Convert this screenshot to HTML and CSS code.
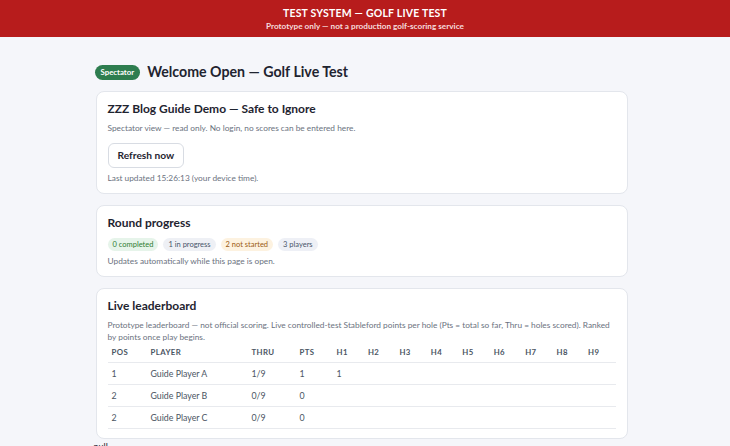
FILE: index.html
```html
<!DOCTYPE html>
<html lang="en">
<head>
    <meta charset="UTF-8">
    <meta name="viewport" content="width=device-width, initial-scale=1.0">
    <title>Welcome Open — Golf Live Test</title>
    <link rel="stylesheet" href="styles.css">
</head>
<body>
    <div class="test-banner">
        <div class="test-banner-title">TEST SYSTEM — GOLF LIVE TEST</div>
        <div class="test-banner-sub">Prototype only — not a production golf-scoring service</div>
    </div>

    <div class="container">
        <div class="page-head">
            <span class="role-badge">Spectator</span>
            <h1>Welcome Open — Golf Live Test</h1>
        </div>

        <div class="card">
            <h2>ZZZ Blog Guide Demo — Safe to Ignore</h2>
            <p class="muted">Spectator view — read only. No login, no scores can be entered here.</p>
            <button class="btn">Refresh now</button>
            <p class="muted">Last updated 15:26:13 (your device time).</p>
        </div>

        <div class="card">
            <h2>Round progress</h2>
            <div class="pills">
                <span class="pill pill-done">0 completed</span>
                <span class="pill pill-live">1 in progress</span>
                <span class="pill pill-wait">2 not started</span>
                <span class="pill pill-count">3 players</span>
            </div>
            <p class="muted">Updates automatically while this page is open.</p>
        </div>

        <div class="card">
            <h2>Live leaderboard</h2>
            <p class="muted">Prototype leaderboard — not official scoring. Live controlled-test Stableford points per hole (Pts = total so far, Thru = holes scored). Ranked by points once play begins.</p>
            <table class="board">
                <thead>
                    <tr>
                        <th class="c-pos">POS</th>
                        <th class="c-player">PLAYER</th>
                        <th class="c-thru">THRU</th>
                        <th class="c-pts">PTS</th>
                        <th>H1</th><th>H2</th><th>H3</th><th>H4</th><th>H5</th>
                        <th>H6</th><th>H7</th><th>H8</th><th>H9</th>
                    </tr>
                </thead>
                <tbody>
                    <tr>
                        <td>1</td><td>Guide Player A</td><td>1/9</td><td>1</td>
                        <td>1</td><td></td><td></td><td></td><td></td><td></td><td></td><td></td><td></td>
                    </tr>
                    <tr>
                        <td>2</td><td>Guide Player B</td><td>0/9</td><td>0</td>
                        <td></td><td></td><td></td><td></td><td></td><td></td><td></td><td></td><td></td>
                    </tr>
                    <tr>
                        <td>2</td><td>Guide Player C</td><td>0/9</td><td>0</td>
                        <td></td><td></td><td></td><td></td><td></td><td></td><td></td><td></td><td></td>
                    </tr>
                </tbody>
            </table>
        </div>
        <div class="stray">null</div>
    </div>
</body>
</html>
```

FILE: styles.css
```css
body {
    font-family: Lato, 'Open Sans', sans-serif;
    margin: 0;
    background-color: #f5f6fa;
    color: #1f2430;
}

.test-banner {
    background-color: #b71c1c;
    color: white;
    text-align: center;
    height: 37px;
    box-sizing: border-box;
    padding-top: 6px;
}

.test-banner-title {
    font-weight: 700;
    font-size: 10.5px;
    line-height: 14px;
    letter-spacing: 0.2px;
}

.test-banner-sub {
    font-size: 8.2px;
    font-weight: 700;
    line-height: 12px;
    color: #f6dcdc;
}

.container {
    max-width: 539px;
    box-sizing: border-box;
    padding-right: 7px;
    margin: 0 auto;
}

.page-head {
    display: flex;
    align-items: center;
    gap: 7px;
    margin: 25px 0 9px;
}

.page-head h1 {
    margin: 0;
    font-size: 14.2px;
    font-weight: 700;
    line-height: 20px;
}

.role-badge {
    background: #2e7d4f;
    color: white;
    font-size: 7.8px;
    font-weight: 700;
    padding: 2px 6px;
    border-radius: 10px;
    line-height: 11px;
    margin-left: -1px;
}

.card {
    background: white;
    border: 1px solid #e3e6ec;
    border-radius: 8px;
    padding: 9px 11px 9px;
    margin-bottom: 11px;
}

.card h2 {
    margin: 0 0 5px;
    font-size: 12px;
    font-weight: 700;
    line-height: 16px;
}

.muted {
    color: #6b7280;
    font-size: 8.3px;
    line-height: 12px;
    margin: 0;
}

.btn {
    display: block;
    font-family: inherit;
    font-size: 10.2px;
    font-weight: 700;
    color: #1f2430;
    background: white;
    border: 1px solid #d8dce3;
    border-radius: 6px;
    padding: 0 9px;
    height: 25px;
    line-height: 23px;
    margin: 9px 0 4px;
    cursor: pointer;
}

.pills {
    display: flex;
    gap: 5px;
    margin: 7px 0 4px;
}

.pill {
    font-size: 7.5px;
    line-height: 13px;
    padding: 0 5px;
    border-radius: 7px;
}

.pill-done { background: #e6f4ea; color: #2e7d32; }
.pill-live { background: #eef0f5; color: #475569; }
.pill-wait { background: #fdf2e0; color: #9a5b13; }
.pill-count { background: #eef0f6; color: #475569; }

.board {
    width: 100%;
    border-collapse: collapse;
    font-size: 8.8px;
}

.board th {
    text-align: left;
    font-size: 7.8px;
    font-weight: 700;
    color: #4b5563;
    letter-spacing: 0.4px;
    padding: 3px 4px 4px;
    line-height: 12px;
    border-bottom: 1px solid #e8eaee;
}

.board td {
    padding: 4px 4px;
    line-height: 13px;
    color: #4b5563;
    border-bottom: 1px solid #e8eaee;
}

.board .c-pos { width: 31px; }
.board .c-player { width: 93px; }
.board .c-thru { width: 40px; }
.board .c-pts { width: 29px; }

.stray {
    font-size: 9px;
    color: #1f2430;
    margin-top: -9px;
    margin-left: -2px;
}
```
